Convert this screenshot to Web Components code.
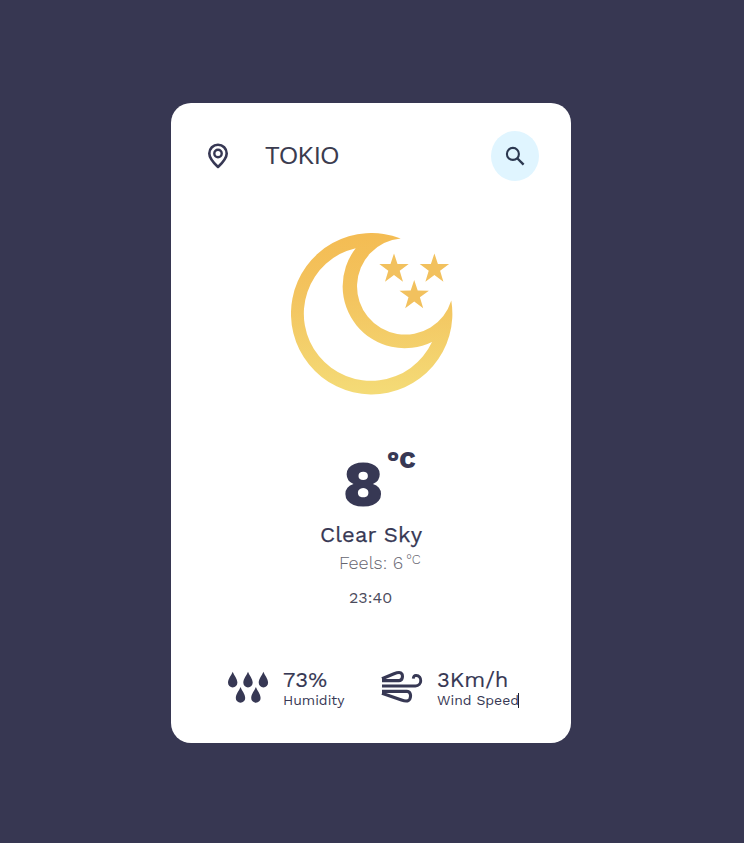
<!DOCTYPE html>
<html lang="en">
<head>
<meta charset="utf-8">
<title>Weather</title>
<style>
html,body{margin:0;height:100%}
body{background:#373752;color:#373854;font-family:"Work Sans","Noto Sans",sans-serif}
</style>
</head>
<body>
<weather-app></weather-app>
<script>
const define=(name,html)=>{
  const t=document.createElement('template');t.innerHTML=html;
  customElements.define(name,class extends HTMLElement{
    constructor(){super();this.attachShadow({mode:'open'}).append(t.content.cloneNode(true));}
  });
};

define('search-bar',`<style>
:host{display:flex;align-items:center;height:50px;padding:28px 32px 0 34px}
.pin{width:26px;height:28px;margin-right:34px}
.city{flex:1;font:24px/28px "Liberation Sans",sans-serif;color:#3b3c4f}
button{width:48px;height:50px;padding:0;border:0;border-radius:50%;background:#e0f5ff;color:#2c3850;display:grid;place-items:center}
svg{display:block}
</style>
<svg class="pin" viewBox="0 0 26 28" fill="none" stroke="#373854" stroke-width="2.6" stroke-linejoin="round"><path d="M13 25C8.8 21 4.3 16.4 4.3 11.4a8.7 8.7 0 0 1 17.4 0C21.7 16.4 17.2 21 13 25Z"/><circle cx="13" cy="11.5" r="3.7" stroke-width="2.4"/></svg>
<span class="city"><slot></slot></span>
<button aria-label="Search"><svg width="24" height="24" viewBox="0 0 24 24" fill="none" stroke="currentColor" stroke-width="2.1"><circle cx="9.9" cy="9.9" r="6"/><path d="M14 14 20.6 20.6" stroke-width="2.4"/></svg></button>`);

define('moon-icon',`<style>:host{display:block;width:162px;height:162px;margin:52px 0 0 120px}svg{display:block}</style>
<svg width="162" height="162" viewBox="291.3 233.2 162 162">
<defs><linearGradient id="g" gradientUnits="userSpaceOnUse" x1="372" y1="233" x2="372" y2="394"><stop offset="0" stop-color="#f4bc53"/><stop offset=".4" stop-color="#f3c45f"/><stop offset="1" stop-color="#f4db77"/></linearGradient>
<path id="s" d="M0-15.4 3.5-4.8 14.7-4.7 5.7 1.9 9 12.9 0 6.1-9 12.9-5.7 1.9-14.7-4.7-3.5-4.8Z"/></defs>
<path fill="url(#g)" fill-rule="evenodd" d="M401 238.6A80.7 80.7 0 1 0 451.6 300.8A48.2 48.2 0 1 1 401 238.6ZM356 248.4A67.2 67.2 0 1 0 432.3 342.1A62 62 0 0 1 356 248.4Z"/>
<g fill="#f2c15e"><use href="#s" x="394.3" y="269"/><use href="#s" x="434.7" y="269"/><use href="#s" x="414.5" y="295.6"/></g>
</svg>`);

define('current-weather',`<style>
:host{display:flex;flex-direction:column;padding-top:48px}
div{white-space:nowrap}
.temp{display:flex;align-items:flex-start;height:77px;margin-left:172px}
.num{font-size:64px;line-height:82px;font-weight:800;width:45px}
.unit{font-size:24px;line-height:34px;font-weight:800;margin-left:-1px}
.sky{font-size:22px;line-height:30px;font-weight:400;letter-spacing:.15px;margin-left:149px;-webkit-text-stroke:.25px currentColor}
.feels{display:flex;height:26px;margin-left:168px;font-weight:300;font-size:18px;line-height:25px;color:#65656f}
.feels small{font-size:13.3px;line-height:20px;margin-left:3px}
.time{font-size:16px;line-height:24px;margin:10px 0 0 178px;color:#4b4b5d}
</style>
<div class="temp"><span class="num"><slot name="temp"></slot></span><span class="unit">°C</span></div>
<div class="sky"><slot name="sky"></slot></div>
<div class="feels"><span><slot name="feels"></slot></span><small>°C</small></div>
<div class="time"><slot name="time"></slot></div>`);

define('weather-stat',`<style>
:host{display:flex;white-space:nowrap}
.value{font-size:22px;line-height:25px;height:25px;-webkit-text-stroke:.15px currentColor}
.label{font-size:14px;line-height:16px}
.icon{width:42px;height:34px;margin:3px 14px 0 0}
</style><div class="icon"><slot name="icon"></slot></div>
<div><div class="value"><slot name="value"></slot></div><div class="label"><slot></slot></div></div>`);

define('drops-icon',`<style>:host,svg{display:block}</style>
<svg width="42" height="34" viewBox="0 0 42 34" fill="#373854"><defs><path id="d" d="M0-8C1.3-4.4 4.7-1 4.7 2.9a4.7 4.9 0 0 1-9.4 0C-4.7-1-1.3-4.4 0-8Z"/></defs>
<use href="#d" x="5.7" y="9.7"/><use href="#d" x="21" y="9.7"/><use href="#d" x="36.4" y="9.7"/><use href="#d" x="13.5" y="25"/><use href="#d" x="28.9" y="25"/></svg>`);

define('wind-icon',`<style>:host,svg{display:block}</style>
<svg width="42" height="34" viewBox="0 0 42 34" fill="none" stroke="#373854" stroke-width="3.1"><path d="M1 10.6H18C21.6 10.6 22 5.9 20.8 3.8C19.4 1.6 16.2 2.5 13 3.8L1 8.8"/><path d="M1 16H34.4C41.4 16 41.4 5.7 35.2 5.5C33.3 5.4 32.4 6.5 32.3 8.6" stroke-width="2.9"/><path d="M1 21.4H25.8C29.6 21.4 30.2 25.8 28.9 28.8C27.4 32 24 31.3 20.5 30L1 23.2"/></svg>`);

define('stat-row',`<style>
:host{display:flex;padding:57px 0 0 56px}
</style><slot></slot>`);

define('text-caret',`<style>:host{display:inline-block;width:1px;height:15px;background:#202030;vertical-align:-3px;margin-left:-1px}</style>`);

define('weather-app',`<style>
:host{display:block;box-sizing:border-box;height:843px;padding:103px 0 0 171px}
main{display:block;width:400px;height:640px;background:#fff;border-radius:20px}
.humidity{width:154px}
</style><main>
<search-bar>TOKIO</search-bar>
<moon-icon></moon-icon>
<current-weather><span slot="temp">8</span><span slot="sky">Clear Sky</span><span slot="feels">Feels: 6</span><span slot="time">23:40</span></current-weather>
<stat-row><weather-stat class="humidity"><drops-icon slot="icon"></drops-icon><span slot="value">73%</span>Humidity</weather-stat><weather-stat><wind-icon slot="icon"></wind-icon><span slot="value">3Km/h</span>Wind Speed<text-caret></text-caret></weather-stat></stat-row>
</main>`);
</script>
</body>
</html>
